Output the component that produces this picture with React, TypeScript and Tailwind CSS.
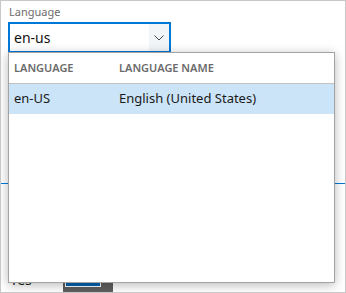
import React from 'react';

const font = { fontFamily: '"Segoe UI", "Noto Sans", "Open Sans", sans-serif' };

function Chevron() {
  return (
    <svg width="10" height="6" viewBox="0 0 10 6" className="block">
      <polyline points="0.5,0.5 5,5 9.5,0.5" fill="none" stroke="#444" strokeWidth="1" />
    </svg>
  );
}

export default function App() {
  return (
    <div
      className="relative w-[346px] h-[293px] overflow-hidden bg-white border border-[#c8c8c8] px-[7px] pt-[3px]"
      style={font}
    >
      <div className="text-[11px] leading-[16px] text-[#6b6b6b] pl-[1px] mb-[2px]">Language</div>
      <div className="flex w-[163px] h-[31px] border-2 border-[#0078d7] bg-white">
        <div className="flex-1 flex items-center pl-[4px] text-[14px] text-[#111]">en-us</div>
        <div className="w-[20px] flex items-center justify-center bg-[#f2f5f8]">
          <Chevron />
        </div>
      </div>

      <div className="-mx-[7px] mt-[130px] h-px bg-[#0078d7]" />

      <div className="flex items-start mt-[95px] pl-[2px]">
        <div className="text-[14px] leading-[18px] text-[#222] w-[53px] -mt-[8px]">Yes</div>
        <div className="w-[50px] h-[14px] bg-[#5f5f5f] pl-[2px] pt-[1px]">
          <div className="w-[36px] h-[7px] border border-white bg-[#0063b1]" />
        </div>
      </div>

      <div className="absolute left-[7px] top-[51px] w-[327px] h-[231px] bg-white border border-[#a3a3a3] shadow-[0_2px_10px_rgba(0,0,0,0.28)]">
        <div className="flex items-center h-[31px] border-b border-[#c2c2c2] text-[11px] font-semibold text-[#6b6b6b] uppercase">
          <div className="w-[110px] pl-[5px]">Language</div>
          <div>Language name</div>
        </div>
        <div className="flex items-center h-[30px] bg-[#cce4f7] text-[13px] text-[#1a1a1a]">
          <div className="w-[110px] pl-[5px]">en-US</div>
          <div>English (United States)</div>
        </div>
      </div>
    </div>
  );
}
